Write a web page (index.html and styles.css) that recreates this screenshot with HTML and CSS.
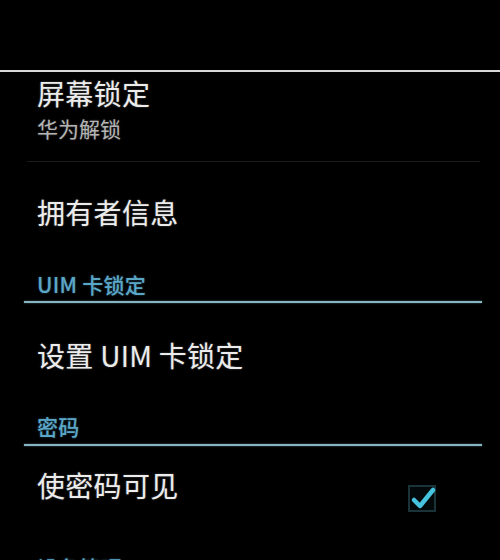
FILE: index.html
```html
<!DOCTYPE html>
<html lang="zh-CN">
<head>
<meta charset="utf-8">
<title>安全设置</title>
<link rel="stylesheet" href="styles.css">
</head>
<body>
<div class="screen">
  <div class="topbar"></div>
  <div class="top-rule"></div>

  <div class="item item-two">
    <div class="title">屏幕锁定</div>
    <div class="summary">华为解锁</div>
  </div>
  <div class="divider"></div>

  <div class="item item-owner">
    <div class="title">拥有者信息</div>
  </div>

  <div class="header header-uim">
    <div class="header-text">UIM 卡锁定</div>
    <div class="header-line"></div>
  </div>

  <div class="item item-uim">
    <div class="title">设置 UIM 卡锁定</div>
  </div>

  <div class="header header-pwd">
    <div class="header-text">密码</div>
    <div class="header-line"></div>
  </div>

  <div class="item item-check">
    <div class="title">使密码可见</div>
    <div class="checkbox">
      <svg width="34" height="34" viewBox="0 0 34 34">
        <rect x="3" y="6" width="26" height="25" fill="#03080a" stroke="#1a3338" stroke-width="2"/>
        <path d="M8 20 L14 26 L27 10" fill="none" stroke="#46c4df" stroke-width="4.5" stroke-linecap="round" stroke-linejoin="round"/>
      </svg>
    </div>
  </div>

  <div class="header header-dev">
    <div class="header-text">设备管理</div>
  </div>
</div>
</body>
</html>
```

FILE: styles.css
```css
html, body {
  margin: 0;
  padding: 0;
  background: #000;
}

.screen {
  width: 500px;
  height: 560px;
  overflow: hidden;
  background: #000;
  font-family: "Noto Sans CJK SC", "Noto Sans", sans-serif;
  color: #e6e6e6;
}

.topbar {
  height: 70px;
}

.top-rule {
  height: 2px;
  background: #d8d8d8;
}

.item {
  padding-left: 37px;
  box-sizing: border-box;
}

.title {
  font-size: 28px;
  line-height: 34px;
  letter-spacing: 0.3px;
  color: #ececec;
  text-shadow: 0 0 2px rgba(255, 255, 255, 0.35);
}

.summary {
  font-size: 21px;
  line-height: 26px;
  color: #b4b4b4;
  text-shadow: 0 0 2px rgba(255, 255, 255, 0.25);
}

.item-two {
  height: 89px;
  padding-top: 4px;
}

.item-two .summary {
  margin-top: 5px;
}

.divider {
  height: 1px;
  margin: 0 20px 0 27px;
  background: #1c1c1c;
}

.item-owner {
  height: 100px;
  display: flex;
  align-items: center;
}

.header {
  padding-left: 24px;
  padding-right: 18px;
}

.header-text {
  padding-left: 13px;
  font-size: 21px;
  line-height: 24px;
  font-weight: 500;
  letter-spacing: 0.3px;
  color: #5aa6c6;
  text-shadow: 0 0 2px rgba(90, 170, 210, 0.5);
}

.header-line {
  height: 2px;
  background: #86b4c0;
  box-shadow: 0 0 2px rgba(134, 180, 192, 0.6);
}

.header-uim {
  padding-top: 10px;
}

.header-uim .header-line {
  margin-top: 5px;
}

.item-uim {
  height: 104px;
  display: flex;
  align-items: center;
}

.header-pwd {
  padding-top: 7px;
}

.header-pwd .header-line {
  margin-top: 6px;
}

.item-check {
  height: 90px;
  padding-top: 22px;
  padding-right: 60px;
  display: flex;
  justify-content: space-between;
  align-items: flex-start;
}

.checkbox {
  margin-top: 12px;
  width: 34px;
  height: 34px;
}

.checkbox svg {
  display: block;
}

.header-dev {
  padding-top: 19px;
}
```
